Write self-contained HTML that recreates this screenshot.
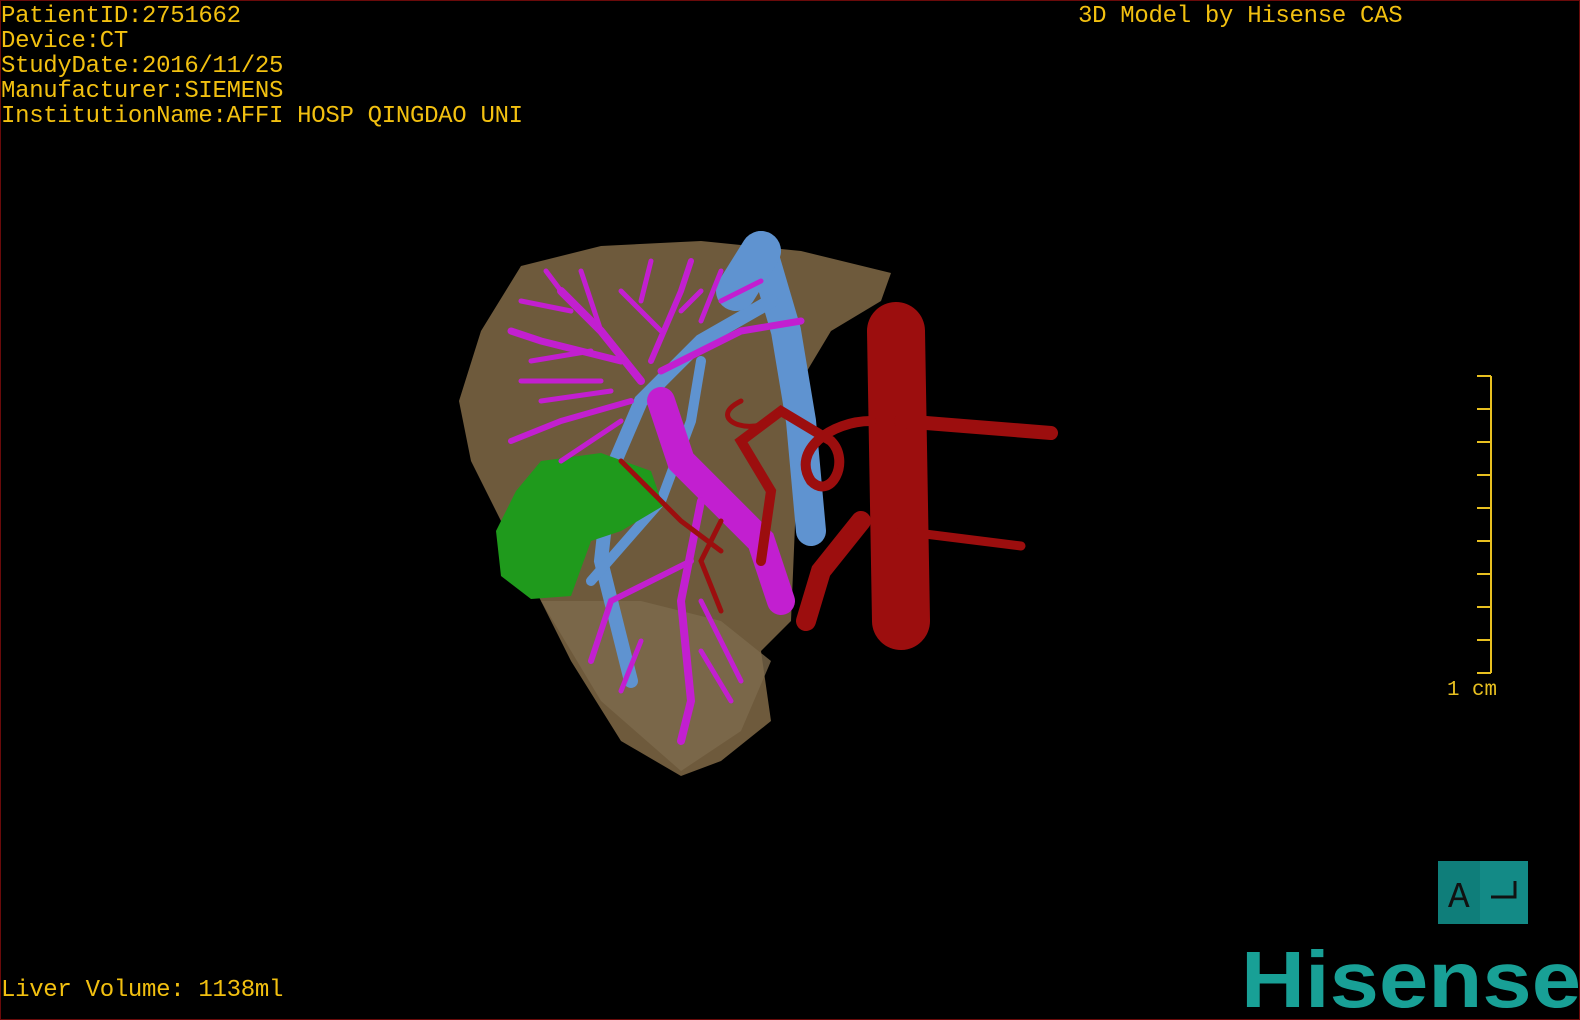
<!DOCTYPE html>
<html><head><meta charset="utf-8"><style>
html,body{margin:0;padding:0;background:#000;}
#c{position:relative;width:1580px;height:1020px;background:#000;overflow:hidden;box-sizing:border-box;border:1px solid #6a0a0a;}
.t{position:absolute;font-family:"Liberation Mono",monospace;font-size:24px;letter-spacing:-0.3px;color:#f2c010;line-height:25px;white-space:pre;}
</style></head><body><div id="c">
<div class="t" style="left:0px;top:3px">PatientID:2751662
Device:CT
StudyDate:2016/11/25
Manufacturer:SIEMENS
InstitutionName:AFFI HOSP QINGDAO UNI</div>
<div class="t" style="left:1077px;top:3px">3D Model by Hisense CAS</div>
<div class="t" style="left:0px;top:977px">Liver Volume: 1138ml</div>
<svg width="1580" height="1020" style="position:absolute;left:0;top:0">
<!-- liver -->
<path d="M520,265 L600,245 L700,240 L800,250 L890,272 L880,300 L830,330 L800,380 L790,620 L760,650 L770,720 L720,760 L680,775 L620,740 L570,660 L540,600 L500,520 L470,460 L458,400 L480,330 Z" fill="#6e5a3c"/>
<path d="M540,600 L600,700 L680,770 L740,730 L770,660 L720,620 L640,600 Z" fill="#7d6a4c" opacity=".8"/>
<!-- blue veins -->
<g stroke="#5f93d0" fill="none" stroke-linecap="round">
<path d="M760,245 L785,330 L800,420 L810,530" stroke-width="30"/>
<path d="M770,300 L700,340 L640,400 L610,470 L600,560 L620,640 L630,680" stroke-width="14"/>
<path d="M700,360 L690,420 L660,500 L590,580" stroke-width="10"/>
<path d="M735,290 L760,250" stroke-width="40"/>
</g>
<!-- green gallbladder -->
<path d="M540,460 L600,452 L650,470 L662,505 L620,530 L590,540 L570,595 L530,598 L500,575 L495,530 L515,490 Z" fill="#1f9a1c"/>
<!-- magenta portal -->
<g stroke="#c21fd0" fill="none" stroke-linecap="round">
<path d="M660,400 L680,460 L720,500 L760,540 L780,600" stroke-width="28"/>
<path d="M640,380 L600,330 L560,290" stroke-width="8"/>
<path d="M620,360 L540,340 L510,330" stroke-width="7"/>
<path d="M630,400 L560,420 L510,440" stroke-width="6"/>
<path d="M650,360 L680,290 L690,260" stroke-width="6"/>
<path d="M660,370 L740,330 L800,320" stroke-width="7"/>
<path d="M700,500 L680,600 L690,700 L680,740" stroke-width="8"/>
<path d="M690,560 L610,600 L590,660" stroke-width="6"/>
<path d="M700,600 L740,680" stroke-width="5"/>
<path d="M600,330 L580,270 M570,310 L520,300 M600,380 L520,380 M620,420 L560,460 M700,320 L720,270 M640,300 L650,260 M560,290 L545,270 M590,350 L530,360 M610,390 L540,400 M720,300 L760,280 M660,330 L620,290 M680,310 L700,290 M640,640 L620,690 M700,650 L730,700" stroke-width="5"/>
</g>
<!-- red arteries -->
<g stroke="#9c0e0e" fill="none" stroke-linecap="round">
<path d="M895,330 L900,620" stroke-width="58"/>
<path d="M900,420 L1050,432" stroke-width="14"/>
<path d="M900,530 L1020,545" stroke-width="9"/>
<path d="M860,520 L820,570 L805,620" stroke-width="20"/>
<path d="M870,420 C830,420 790,450 810,480 C830,500 850,460 830,440 L780,410 L740,440 L770,490 L760,560" stroke-width="10"/>
<path d="M740,400 C700,420 760,440 780,410 M720,520 L700,560 L720,610 M620,460 L680,520 L720,550" stroke-width="5"/>
</g>
<!-- scale bar -->
<g stroke="#e8c020" stroke-width="2" fill="none">
<path d="M1490,375 L1490,672"/>
<path d="M1476,375 H1490 M1476,408 H1490 M1476,441 H1490 M1476,474 H1490 M1476,507 H1490 M1476,540 H1490 M1476,573 H1490 M1476,606 H1490 M1476,639 H1490 M1476,672 H1490"/>
</g>
<text x="1446" y="694" font-family="Liberation Mono,monospace" font-size="21" fill="#e8c020" textLength="50" lengthAdjust="spacingAndGlyphs">1 cm</text>
<!-- A box -->
<rect x="1437" y="860" width="90" height="63" fill="#138a86"/>
<rect x="1437" y="860" width="42" height="63" fill="#0f7e7a"/>
<text x="1447" y="906" font-family="Liberation Mono,monospace" font-size="36" fill="#111">A</text>
<path d="M1490,896 H1514 V880" stroke="#111" stroke-width="3" fill="none"/>
<text x="1240" y="1006" font-family="Liberation Sans,sans-serif" font-weight="bold" font-size="80" fill="#18a096" textLength="340" lengthAdjust="spacingAndGlyphs">Hisense</text>
</svg>
</div></body></html>
